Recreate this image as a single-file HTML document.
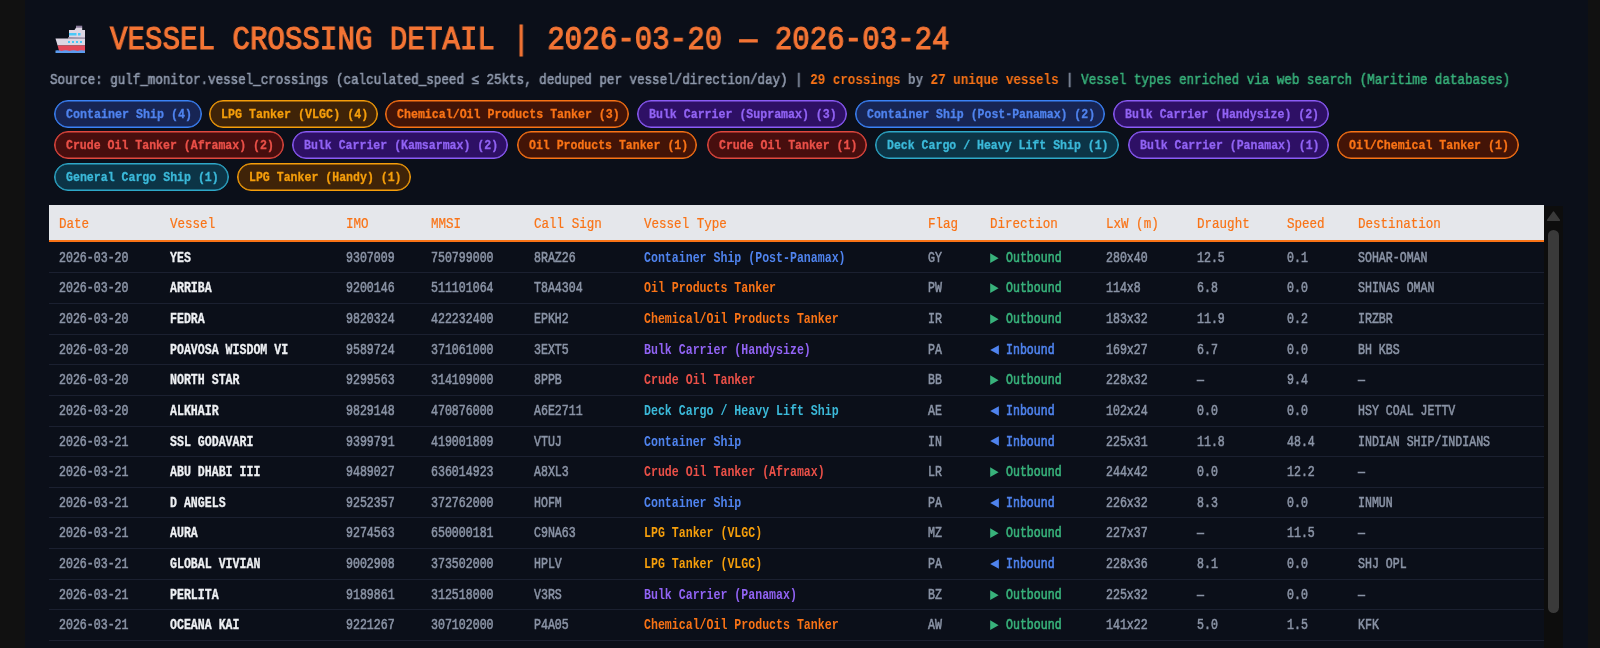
<!DOCTYPE html><html><head><meta charset="utf-8"><style>html,body{margin:0;padding:0;}
body{width:1600px;height:648px;overflow:hidden;background:#111111;position:relative;font-family:"Liberation Mono",monospace;}
#strip-l{position:absolute;left:0;top:0;width:25px;height:648px;background:#111111;}
#strip-r{position:absolute;left:1588px;top:0;width:12px;height:648px;background:#111111;}
#main{position:absolute;left:25px;top:0;width:1563px;height:648px;background:#0b0f19;overflow:hidden;}
#ship{position:absolute;left:27px;top:22px;}
#title{position:absolute;left:84.5px;top:20.6px;font-size:32.6px;line-height:40px;transform:scaleX(0.8947);transform-origin:0 0;color:#f47535;font-weight:normal;-webkit-text-stroke:1.1px #f47535;white-space:nowrap;}
#src{position:absolute;left:25px;top:70.8px;font-size:13.9px;line-height:18px;transform:scaleX(0.9029);transform-origin:0 0;color:#8e98ab;white-space:nowrap;-webkit-text-stroke:0.6px #8e98ab;}
#src b{font-weight:bold;color:#8e98ab;-webkit-text-stroke:0}
#src b.o{color:#f97316;}
#src .g{color:#38b27b;-webkit-text-stroke:0.5px #38b27b}
#chips{position:absolute;left:0;top:0;}

.chip{position:absolute;box-sizing:border-box;height:28px;border:1px solid;border-radius:14px;font-size:12.6px;font-weight:bold;white-space:nowrap;-webkit-text-stroke:0.3px currentColor;}
.chip span{position:absolute;left:11px;top:6px;line-height:16px;transform:scaleX(0.9034);transform-origin:0 0;}
.blue,.tr .c.blue{color:#4f83ee;}
.amber,.tr .c.amber{color:#f59e0b;}
.orange,.tr .c.orange{color:#f97316;}
.purple,.tr .c.purple{color:#9163f4;}
.red,.tr .c.red{color:#ea5048;}
.cyan,.tr .c.cyan{color:#3bb9d9;}
.chip.blue{background:#172554;border-color:#3b82f6;box-shadow:inset 0 0 0 0.6px #3b82f6;}
.chip.amber{background:#3f2308;border-color:#f59e0b;box-shadow:inset 0 0 0 0.6px #f59e0b;}
.chip.orange{background:#431407;border-color:#f97316;box-shadow:inset 0 0 0 0.6px #f97316;}
.chip.purple{background:#2e1065;border-color:#8b5cf6;box-shadow:inset 0 0 0 0.6px #8b5cf6;}
.chip.red{background:#470e0e;border-color:#e0483f;box-shadow:inset 0 0 0 0.6px #e0483f;}
.chip.cyan{background:#0c3446;border-color:#2ea8c8;box-shadow:inset 0 0 0 0.6px #2ea8c8;}
#tbl{position:absolute;left:24px;top:205px;width:1495px;}
.thead{position:relative;height:35.2px;background:#e5e7eb;border-bottom:2px solid #f97316;}
.thead .c{position:absolute;top:9.6px;-webkit-text-stroke:0.2px #f97316;line-height:18px;font-size:13.9px;transform:scaleX(0.9029);transform-origin:0 0;color:#f97316;white-space:nowrap;}
.tr{position:relative;height:29.625px;border-bottom:1px solid #1b2030;}
.sp{height:0.675px}
.tr .c{position:absolute;top:7.0px;-webkit-text-stroke:0.55px currentColor;line-height:18px;font-size:13.8px;transform:scaleX(0.8394);transform-origin:0 0;color:#8a93a5;white-space:nowrap;}
.tr .vn{color:#eef0f3;font-weight:bold;-webkit-text-stroke:0.3px currentColor;}
.tr .vt{font-weight:bold;-webkit-text-stroke:0;}
.tr .c.dir{transform:none;-webkit-text-stroke:0;}
.dir .arr{position:absolute;left:0.4px;top:2.8px;}
.dir span{position:absolute;left:16.3px;top:0;transform:scaleX(0.8394);transform-origin:0 0;-webkit-text-stroke:0.6px currentColor;}
.dout{color:#38b27b}
.din{color:#4f83ee}
#sb{position:absolute;left:1519px;top:205.5px;width:19px;height:443px;background:#0d0d0d;}
#sbup{position:absolute;left:2px;top:5px;}
#sbthumb{position:absolute;left:4px;top:24px;width:11px;height:383px;border-radius:6px;background:#3a3a3a;}
#title,#src,#chips,#tbl{will-change:transform;}
</style></head><body><div id="strip-l"></div><div id="main"><svg id="ship" width="38" height="34" viewBox="0 0 38 34">
<path d="M24 3.7 L30.2 3.7 L30.2 6 L24 6 Z" fill="#8a7a9a"/>
<path d="M17 15.5 L17 8 L22.5 8 L24 5.8 L30.2 5.8 L30.2 8 L33 8 L33 16 Z" fill="#ddd6e3"/>
<rect x="17" y="11" width="7.5" height="2.5" fill="#48c8f8"/>
<rect x="26" y="11" width="2.5" height="2.5" fill="#48c8f8"/>
<rect x="16" y="15.3" width="17" height="1.3" fill="#a99ab5"/>
<path d="M3.5 16.4 L33 16.4 L33 23.6 L5.6 23.6 Z" fill="#ddd6e3"/>
<rect x="16" y="19" width="2" height="2" fill="#48c8f8"/>
<rect x="20" y="19" width="2" height="2" fill="#48c8f8"/>
<rect x="24" y="19" width="2" height="2" fill="#48c8f8"/>
<rect x="28" y="19" width="2" height="2" fill="#48c8f8"/>
<path d="M5.6 23.5 L33 23.5 L33 29.5 L7.2 29.5 Z" fill="#e5485a"/>
<path d="M3.5 28.5 Q5.5 27.8 7.5 28.5 Q9.5 29.3 11.5 28.5 Q13.5 27.8 15.5 28.5 Q17.5 29.3 19.5 28.5 Q21.5 27.8 23.5 28.5 Q25.5 29.3 27.5 28.5 Q29.5 27.8 31.5 28.5 L33 28.5 L33 31 L3.5 31 Z" fill="#5b9cf0"/>
</svg>
<div id="title">VESSEL CROSSING DETAIL | 2026-03-20 — 2026-03-24</div><div id="src">Source: gulf_monitor.vessel_crossings (calculated_speed ≤ 25kts, deduped per vessel/direction/day) | <b class="o">29 crossings</b> <b>by</b> <b class="o">27 unique vessels</b> | <span class="g">Vessel types enriched via web search (Maritime databases)</span></div><div id="chips"><div class="chip blue" style="left:29.00px;top:100.00px;width:147.80px"><span style="transform:scaleX(0.9268)">Container Ship (4)</span></div><div class="chip amber" style="left:183.90px;top:100.00px;width:168.90px"><span style="transform:scaleX(0.9273)">LPG Tanker (VLGC) (4)</span></div><div class="chip orange" style="left:359.90px;top:100.00px;width:244.50px"><span style="transform:scaleX(0.9210)">Chemical/Oil Products Tanker (3)</span></div><div class="chip purple" style="left:612.00px;top:100.00px;width:209.50px"><span style="transform:scaleX(0.9200)">Bulk Carrier (Supramax) (3)</span></div><div class="chip blue" style="left:829.70px;top:100.00px;width:249.90px"><span style="transform:scaleX(0.9146)">Container Ship (Post-Panamax) (2)</span></div><div class="chip purple" style="left:1088.40px;top:100.00px;width:215.80px"><span style="transform:scaleX(0.9169)">Bulk Carrier (Handysize) (2)</span></div><div class="chip red" style="left:29.10px;top:131.30px;width:229.65px"><span style="transform:scaleX(0.9168)">Crude Oil Tanker (Aframax) (2)</span></div><div class="chip purple" style="left:266.90px;top:131.30px;width:215.90px"><span style="transform:scaleX(0.9174)">Bulk Carrier (Kamsarmax) (2)</span></div><div class="chip orange" style="left:491.60px;top:131.30px;width:180.90px"><span style="transform:scaleX(0.9155)">Oil Products Tanker (1)</span></div><div class="chip red" style="left:681.70px;top:131.30px;width:160.10px"><span style="transform:scaleX(0.9152)">Crude Oil Tanker (1)</span></div><div class="chip cyan" style="left:850.40px;top:131.30px;width:243.30px"><span style="transform:scaleX(0.9159)">Deck Cargo / Heavy Lift Ship (1)</span></div><div class="chip purple" style="left:1102.50px;top:131.30px;width:201.30px"><span style="transform:scaleX(0.9136)">Bulk Carrier (Panamax) (1)</span></div><div class="chip orange" style="left:1312.30px;top:131.30px;width:181.60px"><span style="transform:scaleX(0.9196)">Oil/Chemical Tanker (1)</span></div><div class="chip cyan" style="left:29.00px;top:163.20px;width:174.50px"><span style="transform:scaleX(0.9187)">General Cargo Ship (1)</span></div><div class="chip amber" style="left:212.00px;top:163.20px;width:174.30px"><span style="transform:scaleX(0.9175)">LPG Tanker (Handy) (1)</span></div></div><div id="tbl"><div class="thead"><span class="c" style="left:9.60px">Date</span><span class="c" style="left:121.40px">Vessel</span><span class="c" style="left:297.00px">IMO</span><span class="c" style="left:381.60px">MMSI</span><span class="c" style="left:485.00px">Call Sign</span><span class="c" style="left:595.00px">Vessel Type</span><span class="c" style="left:879.10px">Flag</span><span class="c" style="left:940.60px">Direction</span><span class="c" style="left:1056.70px">LxW (m)</span><span class="c" style="left:1147.50px">Draught</span><span class="c" style="left:1238.30px">Speed</span><span class="c" style="left:1309.10px">Destination</span></div><div class="sp"></div><div class="tr"><span class="c" style="left:9.60px">2026-03-20</span><span class="c vn" style="left:121.40px">YES</span><span class="c" style="left:297.00px">9307009</span><span class="c" style="left:381.60px">750799000</span><span class="c" style="left:485.00px">8RAZ26</span><span class="c vt blue" style="left:595.00px">Container Ship (Post-Panamax)</span><span class="c" style="left:879.10px">GY</span><span class="c dir" style="left:940.60px"><svg class="arr" width="10" height="11" viewBox="0 0 10 11"><path d="M0.2 0.2 L8.6 5.15 L0.2 10.1 Z" fill="#38b27b"/></svg><span class="dout">Outbound</span></span><span class="c" style="left:1056.70px">280x40</span><span class="c" style="left:1147.50px">12.5</span><span class="c" style="left:1238.30px">0.1</span><span class="c" style="left:1309.10px">SOHAR-OMAN</span></div><div class="tr"><span class="c" style="left:9.60px">2026-03-20</span><span class="c vn" style="left:121.40px">ARRIBA</span><span class="c" style="left:297.00px">9200146</span><span class="c" style="left:381.60px">511101064</span><span class="c" style="left:485.00px">T8A4304</span><span class="c vt orange" style="left:595.00px">Oil Products Tanker</span><span class="c" style="left:879.10px">PW</span><span class="c dir" style="left:940.60px"><svg class="arr" width="10" height="11" viewBox="0 0 10 11"><path d="M0.2 0.2 L8.6 5.15 L0.2 10.1 Z" fill="#38b27b"/></svg><span class="dout">Outbound</span></span><span class="c" style="left:1056.70px">114x8</span><span class="c" style="left:1147.50px">6.8</span><span class="c" style="left:1238.30px">0.0</span><span class="c" style="left:1309.10px">SHINAS OMAN</span></div><div class="tr"><span class="c" style="left:9.60px">2026-03-20</span><span class="c vn" style="left:121.40px">FEDRA</span><span class="c" style="left:297.00px">9820324</span><span class="c" style="left:381.60px">422232400</span><span class="c" style="left:485.00px">EPKH2</span><span class="c vt orange" style="left:595.00px">Chemical/Oil Products Tanker</span><span class="c" style="left:879.10px">IR</span><span class="c dir" style="left:940.60px"><svg class="arr" width="10" height="11" viewBox="0 0 10 11"><path d="M0.2 0.2 L8.6 5.15 L0.2 10.1 Z" fill="#38b27b"/></svg><span class="dout">Outbound</span></span><span class="c" style="left:1056.70px">183x32</span><span class="c" style="left:1147.50px">11.9</span><span class="c" style="left:1238.30px">0.2</span><span class="c" style="left:1309.10px">IRZBR</span></div><div class="tr"><span class="c" style="left:9.60px">2026-03-20</span><span class="c vn" style="left:121.40px">POAVOSA WISDOM VI</span><span class="c" style="left:297.00px">9589724</span><span class="c" style="left:381.60px">371061000</span><span class="c" style="left:485.00px">3EXT5</span><span class="c vt purple" style="left:595.00px">Bulk Carrier (Handysize)</span><span class="c" style="left:879.10px">PA</span><span class="c dir" style="left:940.60px"><svg class="arr" width="10" height="11" viewBox="0 0 10 11"><path d="M8.9 0.2 L0.2 5.0 L8.9 9.7 Z" fill="#4f83ee"/></svg><span class="din">Inbound</span></span><span class="c" style="left:1056.70px">169x27</span><span class="c" style="left:1147.50px">6.7</span><span class="c" style="left:1238.30px">0.0</span><span class="c" style="left:1309.10px">BH KBS</span></div><div class="tr"><span class="c" style="left:9.60px">2026-03-20</span><span class="c vn" style="left:121.40px">NORTH STAR</span><span class="c" style="left:297.00px">9299563</span><span class="c" style="left:381.60px">314109000</span><span class="c" style="left:485.00px">8PPB</span><span class="c vt red" style="left:595.00px">Crude Oil Tanker</span><span class="c" style="left:879.10px">BB</span><span class="c dir" style="left:940.60px"><svg class="arr" width="10" height="11" viewBox="0 0 10 11"><path d="M0.2 0.2 L8.6 5.15 L0.2 10.1 Z" fill="#38b27b"/></svg><span class="dout">Outbound</span></span><span class="c" style="left:1056.70px">228x32</span><span class="c" style="left:1147.50px">—</span><span class="c" style="left:1238.30px">9.4</span><span class="c" style="left:1309.10px">—</span></div><div class="tr"><span class="c" style="left:9.60px">2026-03-20</span><span class="c vn" style="left:121.40px">ALKHAIR</span><span class="c" style="left:297.00px">9829148</span><span class="c" style="left:381.60px">470876000</span><span class="c" style="left:485.00px">A6E2711</span><span class="c vt cyan" style="left:595.00px">Deck Cargo / Heavy Lift Ship</span><span class="c" style="left:879.10px">AE</span><span class="c dir" style="left:940.60px"><svg class="arr" width="10" height="11" viewBox="0 0 10 11"><path d="M8.9 0.2 L0.2 5.0 L8.9 9.7 Z" fill="#4f83ee"/></svg><span class="din">Inbound</span></span><span class="c" style="left:1056.70px">102x24</span><span class="c" style="left:1147.50px">0.0</span><span class="c" style="left:1238.30px">0.0</span><span class="c" style="left:1309.10px">HSY COAL JETTV</span></div><div class="tr"><span class="c" style="left:9.60px">2026-03-21</span><span class="c vn" style="left:121.40px">SSL GODAVARI</span><span class="c" style="left:297.00px">9399791</span><span class="c" style="left:381.60px">419001809</span><span class="c" style="left:485.00px">VTUJ</span><span class="c vt blue" style="left:595.00px">Container Ship</span><span class="c" style="left:879.10px">IN</span><span class="c dir" style="left:940.60px"><svg class="arr" width="10" height="11" viewBox="0 0 10 11"><path d="M8.9 0.2 L0.2 5.0 L8.9 9.7 Z" fill="#4f83ee"/></svg><span class="din">Inbound</span></span><span class="c" style="left:1056.70px">225x31</span><span class="c" style="left:1147.50px">11.8</span><span class="c" style="left:1238.30px">48.4</span><span class="c" style="left:1309.10px">INDIAN SHIP/INDIANS</span></div><div class="tr"><span class="c" style="left:9.60px">2026-03-21</span><span class="c vn" style="left:121.40px">ABU DHABI III</span><span class="c" style="left:297.00px">9489027</span><span class="c" style="left:381.60px">636014923</span><span class="c" style="left:485.00px">A8XL3</span><span class="c vt red" style="left:595.00px">Crude Oil Tanker (Aframax)</span><span class="c" style="left:879.10px">LR</span><span class="c dir" style="left:940.60px"><svg class="arr" width="10" height="11" viewBox="0 0 10 11"><path d="M0.2 0.2 L8.6 5.15 L0.2 10.1 Z" fill="#38b27b"/></svg><span class="dout">Outbound</span></span><span class="c" style="left:1056.70px">244x42</span><span class="c" style="left:1147.50px">0.0</span><span class="c" style="left:1238.30px">12.2</span><span class="c" style="left:1309.10px">—</span></div><div class="tr"><span class="c" style="left:9.60px">2026-03-21</span><span class="c vn" style="left:121.40px">D ANGELS</span><span class="c" style="left:297.00px">9252357</span><span class="c" style="left:381.60px">372762000</span><span class="c" style="left:485.00px">HOFM</span><span class="c vt blue" style="left:595.00px">Container Ship</span><span class="c" style="left:879.10px">PA</span><span class="c dir" style="left:940.60px"><svg class="arr" width="10" height="11" viewBox="0 0 10 11"><path d="M8.9 0.2 L0.2 5.0 L8.9 9.7 Z" fill="#4f83ee"/></svg><span class="din">Inbound</span></span><span class="c" style="left:1056.70px">226x32</span><span class="c" style="left:1147.50px">8.3</span><span class="c" style="left:1238.30px">0.0</span><span class="c" style="left:1309.10px">INMUN</span></div><div class="tr"><span class="c" style="left:9.60px">2026-03-21</span><span class="c vn" style="left:121.40px">AURA</span><span class="c" style="left:297.00px">9274563</span><span class="c" style="left:381.60px">650000181</span><span class="c" style="left:485.00px">C9NA63</span><span class="c vt amber" style="left:595.00px">LPG Tanker (VLGC)</span><span class="c" style="left:879.10px">MZ</span><span class="c dir" style="left:940.60px"><svg class="arr" width="10" height="11" viewBox="0 0 10 11"><path d="M0.2 0.2 L8.6 5.15 L0.2 10.1 Z" fill="#38b27b"/></svg><span class="dout">Outbound</span></span><span class="c" style="left:1056.70px">227x37</span><span class="c" style="left:1147.50px">—</span><span class="c" style="left:1238.30px">11.5</span><span class="c" style="left:1309.10px">—</span></div><div class="tr"><span class="c" style="left:9.60px">2026-03-21</span><span class="c vn" style="left:121.40px">GLOBAL VIVIAN</span><span class="c" style="left:297.00px">9002908</span><span class="c" style="left:381.60px">373502000</span><span class="c" style="left:485.00px">HPLV</span><span class="c vt amber" style="left:595.00px">LPG Tanker (VLGC)</span><span class="c" style="left:879.10px">PA</span><span class="c dir" style="left:940.60px"><svg class="arr" width="10" height="11" viewBox="0 0 10 11"><path d="M8.9 0.2 L0.2 5.0 L8.9 9.7 Z" fill="#4f83ee"/></svg><span class="din">Inbound</span></span><span class="c" style="left:1056.70px">228x36</span><span class="c" style="left:1147.50px">8.1</span><span class="c" style="left:1238.30px">0.0</span><span class="c" style="left:1309.10px">SHJ OPL</span></div><div class="tr"><span class="c" style="left:9.60px">2026-03-21</span><span class="c vn" style="left:121.40px">PERLITA</span><span class="c" style="left:297.00px">9189861</span><span class="c" style="left:381.60px">312518000</span><span class="c" style="left:485.00px">V3RS</span><span class="c vt purple" style="left:595.00px">Bulk Carrier (Panamax)</span><span class="c" style="left:879.10px">BZ</span><span class="c dir" style="left:940.60px"><svg class="arr" width="10" height="11" viewBox="0 0 10 11"><path d="M0.2 0.2 L8.6 5.15 L0.2 10.1 Z" fill="#38b27b"/></svg><span class="dout">Outbound</span></span><span class="c" style="left:1056.70px">225x32</span><span class="c" style="left:1147.50px">—</span><span class="c" style="left:1238.30px">0.0</span><span class="c" style="left:1309.10px">—</span></div><div class="tr"><span class="c" style="left:9.60px">2026-03-21</span><span class="c vn" style="left:121.40px">OCEANA KAI</span><span class="c" style="left:297.00px">9221267</span><span class="c" style="left:381.60px">307102000</span><span class="c" style="left:485.00px">P4A05</span><span class="c vt orange" style="left:595.00px">Chemical/Oil Products Tanker</span><span class="c" style="left:879.10px">AW</span><span class="c dir" style="left:940.60px"><svg class="arr" width="10" height="11" viewBox="0 0 10 11"><path d="M0.2 0.2 L8.6 5.15 L0.2 10.1 Z" fill="#38b27b"/></svg><span class="dout">Outbound</span></span><span class="c" style="left:1056.70px">141x22</span><span class="c" style="left:1147.50px">5.0</span><span class="c" style="left:1238.30px">1.5</span><span class="c" style="left:1309.10px">KFK</span></div><div class="tr"><span class="c" style="left:9.60px">2026-03-21</span><span class="c vn" style="left:121.40px">SEA STAR</span><span class="c" style="left:297.00px">9100000</span><span class="c" style="left:381.60px">300000000</span><span class="c" style="left:485.00px">XXXX</span><span class="c vt blue" style="left:595.00px">Container Ship</span><span class="c" style="left:879.10px">PA</span><span class="c dir" style="left:940.60px"><svg class="arr" width="10" height="11" viewBox="0 0 10 11"><path d="M8.9 0.2 L0.2 5.0 L8.9 9.7 Z" fill="#4f83ee"/></svg><span class="din">Inbound</span></span><span class="c" style="left:1056.70px">200x30</span><span class="c" style="left:1147.50px">8.0</span><span class="c" style="left:1238.30px">0.0</span><span class="c" style="left:1309.10px">—</span></div></div><div id="sb"><svg id="sbup" width="15" height="12" viewBox="0 0 15 12"><path d="M7.5 1.2 L13.3 9.3 L1.7 9.3 Z" fill="#3a3a3a" stroke="#3a3a3a" stroke-width="1.6" stroke-linejoin="round"/></svg><div id="sbthumb"></div></div></div><div id="strip-r"></div></body></html>
